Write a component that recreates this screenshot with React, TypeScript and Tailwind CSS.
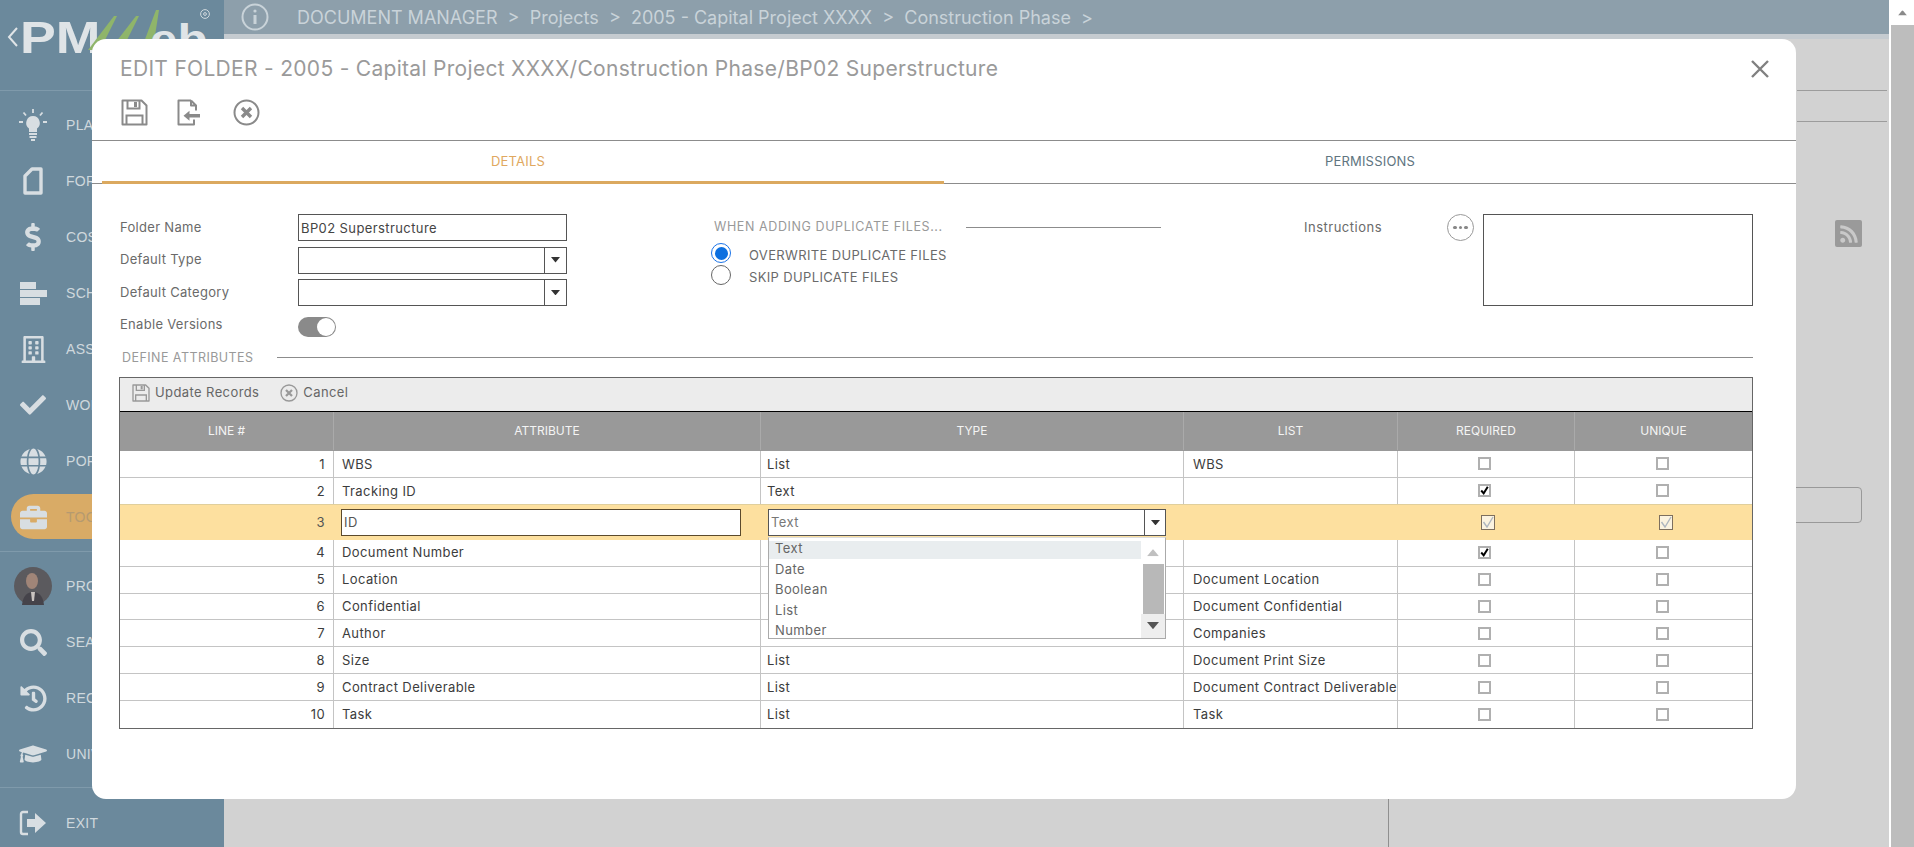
import {
  FaDollarSign,
  FaCheck,
  FaGlobe,
  FaBriefcase,
  FaSearch,
  FaHistory,
  FaGraduationCap,
  FaRss,
  FaRegBuilding,
} from "react-icons/fa";
import type { ReactNode } from "react";

const fontStack = "font-['Inter','Noto_Sans',sans-serif]";

const BulbIcon = () => (
  <svg width="28" height="32" viewBox="0 0 28 32" fill="none" stroke="#d8dee2">
    <path d="M14 7a7 7 0 0 0-4 12.6V23h8v-3.4A7 7 0 0 0 14 7z" fill="#d8dee2" stroke="none" />
    <path d="M10 25h8M10.5 28h7M12 31h4" strokeWidth="2" />
    <path d="M14 0v4M4.5 3.5l2.5 3M23.5 3.5l-2.5 3M0 13h4M24 13h4" strokeWidth="1.8" />
  </svg>
);

const FormIcon = () => (
  <svg width="20" height="28" viewBox="0 0 20 28" fill="none" stroke="#d8dee2" strokeWidth="3.4">
    <path d="M9 2h9v24H2V9z" strokeLinejoin="round" />
  </svg>
);

const BarsIcon = () => (
  <svg width="27" height="23" viewBox="0 0 27 23" fill="#d8dee2">
    <rect x="0" y="0" width="16" height="7" />
    <rect x="0" y="8" width="27" height="7" />
    <rect x="0" y="16" width="20" height="7" />
  </svg>
);

const ExitIcon = () => (
  <svg width="28" height="28" viewBox="0 0 28 28" fill="none">
    <path d="M9 3H4a2 2 0 0 0-2 2v18a2 2 0 0 0 2 2h5" stroke="#d8dee2" strokeWidth="2.4" />
    <path d="M8 10h8V4l11 10-11 10v-6H8z" fill="#d8dee2" />
  </svg>
);

const Avatar = () => (
  <svg width="38" height="38" viewBox="0 0 38 38">
    <circle cx="19" cy="19" r="19" fill="#5b5a5e" />
    <ellipse cx="18" cy="14" rx="6" ry="8" fill="#a08578" />
    <path d="M8 38c1-10 6-13 11-13s10 3 11 13z" fill="#45434a" />
    <path d="M17 25h4l-1 9h-2z" fill="#c9c3c0" />
  </svg>
);

const SaveIcon = ({ size = 27, color = "#8a8a8a" }: { size?: number; color?: string }) => (
  <svg width={size} height={size} viewBox="0 0 27 27" fill="none" stroke={color} strokeWidth="2">
    <path d="M1.5 1.5h19l5 5v19h-24z" strokeLinejoin="round" />
    <path d="M6.5 1.5v8h12v-8" />
    <rect x="13" y="3" width="3" height="5" fill={color} stroke="none" />
    <path d="M5.5 25.5v-9h16v9" />
  </svg>
);

const LoadIcon = () => (
  <svg width="24" height="27" viewBox="0 0 24 27" fill="none" stroke="#8a8a8a" strokeWidth="2">
    <path d="M14 1.5H1.5v24H17v-5M14 1.5l5 5v5M14 1.5v5h5" strokeLinejoin="round" />
    <path d="M10 15h13v3.5H10z" fill="#8a8a8a" stroke="none" />
    <path d="M6.5 16.8l6-5v10z" fill="#8a8a8a" stroke="none" />
  </svg>
);

const CancelIcon = ({ size = 27, color = "#8a8a8a" }: { size?: number; color?: string }) => (
  <svg width={size} height={size} viewBox="0 0 27 27" fill="none" stroke={color}>
    <circle cx="13.5" cy="13.5" r="12" strokeWidth="2" />
    <path d="M9 9l9 9M18 9l-9 9" strokeWidth="3.4" />
  </svg>
);

const Caret = ({ className = "", w = 9 }: { className?: string; w?: number }) => (
  <svg width={w} height={w * 0.6} viewBox="0 0 10 6" className={className}>
    <path d="M0 0h10L5 6z" fill="currentColor" />
  </svg>
);

const navTop: { icon: ReactNode; label: string; active?: boolean }[] = [
  { icon: <BulbIcon />, label: "PLANNING" },
  { icon: <FormIcon />, label: "FORMS" },
  { icon: <FaDollarSign size={28} color="#d8dee2" />, label: "COSTS" },
  { icon: <BarsIcon />, label: "SCHEDULES" },
  { icon: <FaRegBuilding size={27} color="#d8dee2" />, label: "ASSETS" },
  { icon: <FaCheck size={26} color="#d8dee2" />, label: "WORKFLOW" },
  { icon: <FaGlobe size={27} color="#d8dee2" />, label: "PORTFOLIO" },
  { icon: <FaBriefcase size={27} color="#d8dee2" />, label: "TOOLS", active: true },
];

const navBottom: { icon: ReactNode; label: string }[] = [
  { icon: <Avatar />, label: "PROFILE" },
  { icon: <FaSearch size={27} color="#d8dee2" />, label: "SEARCH" },
  { icon: <FaHistory size={27} color="#d8dee2" />, label: "RECENT" },
  { icon: <FaGraduationCap size={28} color="#d8dee2" />, label: "UNIVERSITY" },
];

const NavItem = ({ icon, label, active }: { icon: ReactNode; label: string; active?: boolean }) => (
  <div className="h-[56px] flex items-center relative">
    {active && <div className="absolute left-[11px] top-[5px] h-[45px] w-[213px] rounded-l-[23px] bg-[#d9ab66]" />}
    <div className="relative w-[66px] flex justify-center">{icon}</div>
    <span className={`relative text-[14px] tracking-[0.3px] font-['Liberation_Sans',sans-serif] ${active ? "text-[#b59a70]" : "text-[#cfd8dd]"}`}>{label}</span>
  </div>
);

const logoFont = "font-['Liberation_Sans',sans-serif]";

const Sidebar = () => (
  <div className="w-[224px] shrink-0 h-full bg-[#6b899c] flex flex-col overflow-hidden">
    <div className="h-[91px] shrink-0 border-b border-[#7f9aab] relative">
      <svg width="12" height="20" viewBox="0 0 12 20" fill="none" stroke="#dfe4e7" strokeWidth="2" className="absolute left-[7px] top-[27px]">
        <path d="M10 1L2 10l8 9" />
      </svg>
      <span className={`absolute left-[20px] top-[15px] text-[44px] leading-[46px] font-bold text-[#dfe4e7] origin-left scale-x-[1.22] ${logoFont}`}>PM</span>
      <svg width="80" height="44" viewBox="0 0 80 44" className="absolute left-[86px] top-[8px]">
        <path d="M2 42L28 8h3L14 42z" fill="#8fb56a" />
        <path d="M30 34L50 8h3L40 34z" fill="#8fb56a" />
        <path d="M58 34L70 2h3L68 34z" fill="#8fb56a" />
      </svg>
      <span className={`absolute left-[150px] top-[17px] text-[44px] leading-[46px] font-bold text-[#dfe4e7] origin-left scale-x-[1.12] ${logoFont}`}>eb</span>
      <svg width="10" height="10" viewBox="0 0 10 10" fill="none" stroke="#cfd8dd" className="absolute left-[200px] top-[9px]">
        <circle cx="5" cy="5" r="4.4" />
        <circle cx="5" cy="5" r="1.4" />
      </svg>
    </div>
    <div className="pt-[6px]">
      {navTop.map((n) => (
        <NavItem key={n.label} {...n} />
      ))}
    </div>
    <div className="mt-[6px] border-t border-[#7f9aab] pt-[6px]">
      {navBottom.map((n) => (
        <NavItem key={n.label} {...n} />
      ))}
    </div>
    <div className="mt-[5px] border-t border-[#7f9aab] pt-[7px]">
      <NavItem icon={<ExitIcon />} label="EXIT" />
    </div>
  </div>
);

const Background = () => (
  <div className="flex-1 h-full flex flex-col bg-[#d2d2d2]">
    <div className="h-[34px] shrink-0 bg-[#8d9fab] flex items-center pl-[17px] text-[18px] text-[#c9d3d9]">
      <svg width="28" height="28" viewBox="0 0 28 28" fill="none" stroke="#c9d3d9" strokeWidth="2">
        <circle cx="14" cy="14" r="12.5" />
        <path d="M14 12v9" strokeWidth="3" />
        <circle cx="14" cy="8" r="1.6" fill="#c9d3d9" stroke="none" />
      </svg>
      <span className="ml-[28px] whitespace-pre">DOCUMENT MANAGER  &gt;  Projects  &gt;  2005 - Capital Project XXXX  &gt;  Construction Phase  &gt;</span>
    </div>
    <div className="h-[5px] shrink-0 bg-[#c5cbd0]" />
    <div className="flex-1 flex flex-col items-end pr-[2px] relative">
      <div className="mt-[51px] h-[32px] w-[90px] border-y border-[#9c9c9c]" />
      <div className="mt-[98px] mr-[25px] w-[27px] h-[27px] bg-[#9a9a9a] rounded-[2px] flex items-center justify-center">
        <FaRss size={20} color="#c9c9c9" />
      </div>
      <div className="mt-[240px] mr-[25px] w-[80px] h-[36px] border border-[#999] rounded-[4px]" />
      <div className="absolute left-[1164px] top-[760px] w-px h-[60px] bg-[#8f8f8f]" />
    </div>
  </div>
);

const PageScrollbar = () => (
  <div className="w-[25px] shrink-0 h-full border-l-[2px] border-white flex flex-col bg-[#bdbdbd]">
    <div className="h-[25px] bg-white flex items-center justify-center text-[#8a8a8a]">
      <Caret className="rotate-180" />
    </div>
  </div>
);

const Field = ({ label, children }: { label: string; children: ReactNode }) => (
  <div className="flex items-center">
    <span className="w-[178px] text-[13px] tracking-[0.3px] text-[#6a6a6a]">{label}</span>
    {children}
  </div>
);

const ComboBox = () => (
  <div className="w-[269px] h-[27px] border border-[#555] flex justify-end">
    <div className="w-[22px] border-l border-[#555] flex items-center justify-center text-[#333]">
      <Caret />
    </div>
  </div>
);

const Radio = ({ label, on }: { label: string; on?: boolean }) => (
  <div className="flex items-center h-[22px]">
    <span className={`w-[20px] h-[20px] rounded-full border flex items-center justify-center ${on ? "border-[#1a73e8] bg-white" : "border-[#666]"}`}>
      {on && <span className="w-[13px] h-[13px] rounded-full bg-[#0b6fe0]" />}
    </span>
    <span className="ml-[18px] mt-[6px] text-[13px] tracking-[0.35px] text-[#6a6a6a]">{label}</span>
  </div>
);

const cols = "grid grid-cols-[213px_427px_423px_214px_177px_178px]";

const rows: [number, string, string, string, boolean][] = [
  [1, "WBS", "List", "WBS", false],
  [2, "Tracking ID", "Text", "", true],
  [3, "", "", "", false],
  [4, "Document Number", "", "", true],
  [5, "Location", "", "Document Location", false],
  [6, "Confidential", "", "Document Confidential", false],
  [7, "Author", "", "Companies", false],
  [8, "Size", "List", "Document Print Size", false],
  [9, "Contract Deliverable", "List", "Document Contract Deliverable", false],
  [10, "Task", "List", "Task", false],
];

const Check = ({ on }: { on?: boolean }) => (
  <span className="mr-[3px] w-[13px] h-[13px] border-2 border-[#b0b0b0] bg-white flex items-center justify-center">
    {on && (
      <svg width="11" height="11" viewBox="0 0 11 11" fill="none" stroke="#000" strokeWidth="2.4">
        <path d="M1.5 5.5l3 3.5 5-8" />
      </svg>
    )}
  </span>
);

const BigCheck = () => (
  <span className="ml-[5px] w-[14px] h-[15px] border border-[#7d6f5e] bg-[#fbf3e0] flex items-center justify-center">
    <svg width="12" height="12" viewBox="0 0 12 12" fill="none" stroke="#aeb6bf" strokeWidth="1.4">
      <path d="M1.5 6l3.5 5 6-10" />
    </svg>
  </span>
);

const cell = "border-l border-[#c4c4c4] flex items-center";

const EditRow = () => (
  <div className={`${cols} h-[36px] bg-[#fde09f] border-t border-[#e0cf9c] -mt-px relative`}>
    <div className="flex items-center justify-end pr-[8px] text-[13px] text-[#555]">3</div>
    <div className="flex items-center pl-[8px]">
      <input readOnly value="ID" className="w-[400px] h-[27px] bg-white border border-[#5c4a2c] px-[2px] text-[13px] text-[#555] outline-none" />
    </div>
    <div className="flex items-center pl-[8px]">
      <div className="w-[398px] h-[27px] bg-white border border-[#555] flex items-center justify-between text-[13px] text-[#777]">
        <span className="pl-[2px]">Text</span>
        <span className="w-[21px] h-full border-l border-[#555] flex items-center justify-center text-[#333]">
          <Caret />
        </span>
      </div>
    </div>
    <div />
    <div className="flex items-center justify-center">
      <BigCheck />
    </div>
    <div className="flex items-center justify-center">
      <BigCheck />
    </div>
    <div className="absolute left-[648px] top-[32px] w-[398px] h-[102px] bg-white border border-[#aaa] border-t-[#ddd] z-10 overflow-hidden text-[13px] text-[#666]">
      <div className="mt-[3px] h-[18px] w-[372px] bg-[#e9edef] pl-[6px] leading-[15px]">Text</div>
      {["Date", "Boolean", "List", "Number"].map((o) => (
        <div key={o} className="pl-[6px] h-[20.4px] leading-[20px]">{o}</div>
      ))}
      <div className="absolute right-0 top-0 bottom-0 w-[24px] flex flex-col items-center">
        <div className="h-[26px] w-full flex items-center justify-center text-[#c0c0c0] pt-[4px]">
          <Caret className="rotate-180" w={12} />
        </div>
        <div className="h-[50px] w-[21px] bg-[#b8b8b8]" />
        <div className="flex-1 w-full bg-[#eeeeee] flex items-center justify-center text-[#555]">
          <Caret w={12} />
        </div>
      </div>
    </div>
  </div>
);

const AttributesGrid = () => (
  <div className="border border-[#666] text-[13px] tracking-[0.4px]">
    <div className="h-[34px] pb-[3px] bg-[#ececec] border-b border-black flex items-center pl-[12px] text-[#666]">
      <SaveIcon size={18} color="#999" />
      <span className="ml-[5px]">Update Records</span>
      <span className="ml-[21px]">
        <CancelIcon size={18} color="#999" />
      </span>
      <span className="ml-[5px]">Cancel</span>
    </div>
    <div className={`${cols} h-[39px] pb-[1px] bg-[#999] text-[12px] tracking-normal text-[#f4f4f4]`}>
      {["LINE #", "ATTRIBUTE", "TYPE", "LIST", "REQUIRED", "UNIQUE"].map((h, i) => (
        <div key={h} className={`flex items-center justify-center ${i > 0 ? "border-l border-[#aaaaaa]" : ""}`}>
          {h}
        </div>
      ))}
    </div>
    {rows.map(([n, attr, type, list, req]) =>
      n === 3 ? (
        <EditRow key={n} />
      ) : (
        <div key={n} className={`${cols} h-[26.9px] ${n === 10 ? "" : "border-b border-[#c4c4c4]"} text-[#3c3c3c]`}>
          <div className="flex items-center justify-end pr-[8px] pt-[1px]">{n}</div>
          <div className={`${cell} pl-[8px] pt-[1px]`}>{attr}</div>
          <div className={`${cell} pl-[6px] pt-[1px]`}>{type}</div>
          <div className={`${cell} pl-[9px] pt-[1px] overflow-hidden whitespace-nowrap`}>{list}</div>
          <div className={`${cell} justify-center`}>
            <Check on={req} />
          </div>
          <div className={`${cell} justify-center`}>
            <Check />
          </div>
        </div>
      ),
    )}
  </div>
);

const Modal = () => (
  <div className="absolute left-[92px] top-[39px] w-[1704px] h-[760px] bg-white rounded-[14px] overflow-hidden">
    <div className="h-[60px] flex items-start justify-between pl-[28px] pr-[26px] pt-[15px]">
      <span className="text-[21px] leading-[30px] tracking-[0.3px] text-[#9a9a9a]">
        EDIT FOLDER - 2005 - Capital Project XXXX/Construction Phase/BP02 Superstructure
      </span>
      <svg width="20" height="20" viewBox="0 0 20 20" stroke="#808080" strokeWidth="2.4" className="mt-[5px]">
        <path d="M2 2l16 16M18 2L2 18" />
      </svg>
    </div>
    <div className="h-[42px] flex items-start pl-[29px] border-b border-[#8c8c8c]">
      <SaveIcon />
      <span className="ml-[29px]">
        <LoadIcon />
      </span>
      <span className="ml-[32px]">
        <CancelIcon />
      </span>
    </div>
    <div className="h-[43px] flex border-b border-[#8c8c8c] text-[13px] tracking-[0.2px] relative">
      <div className="w-[842px] ml-[10px] -mb-px pr-[10px] pt-[1px] border-b-[3px] border-[#dba95f] flex items-center justify-center text-[#e0a860]">
        DETAILS
      </div>
      <div className="flex-1 flex items-center justify-center text-[#607580]">PERMISSIONS</div>
    </div>
    <div className="flex pl-[28px] pt-[30px] h-[156px] text-[#6a6a6a]">
      <div className="w-[447px] flex flex-col gap-[5.5px]">
        <Field label="Folder Name">
          <input readOnly value="BP02 Superstructure" className="w-[269px] h-[27px] border border-[#555] px-[2px] text-[13px] tracking-[0.4px] text-[#444] outline-none" />
        </Field>
        <Field label="Default Type">
          <ComboBox />
        </Field>
        <Field label="Default Category">
          <ComboBox />
        </Field>
        <div className="mt-[1px]">
          <Field label="Enable Versions">
            <span className="w-[38px] h-[20px] rounded-full bg-[#8a8a8a] flex justify-end items-center pr-[1px] mt-[4px]">
              <span className="w-[18px] h-[18px] rounded-full bg-white" />
            </span>
          </Field>
        </div>
      </div>
      <div className="ml-[144px] w-[449px] shrink-0">
        <div className="flex items-center h-[26px] pl-[3px]">
          <span className="text-[12.5px] tracking-[0.6px] text-[#999] whitespace-nowrap">WHEN ADDING DUPLICATE FILES...</span>
          <span className="ml-[23px] w-[195px] shrink-0 h-px bg-[#8c8c8c]" />
        </div>
        <div className="mt-[2px]">
          <Radio label="OVERWRITE DUPLICATE FILES" on />
          <Radio label="SKIP DUPLICATE FILES" />
        </div>
      </div>
      <div className="ml-[144px] flex items-start">
        <span className="w-[143px] h-[27px] leading-[27px] text-[13px] tracking-[0.5px]">Instructions</span>
        <span className="w-[27px] h-[27px] rounded-full border border-[#999] flex items-center justify-center gap-[2px]">
          <span className="w-[3.5px] h-[3.5px] rounded-full bg-[#888]" />
          <span className="w-[3.5px] h-[3.5px] rounded-full bg-[#888]" />
          <span className="w-[3.5px] h-[3.5px] rounded-full bg-[#888]" />
        </span>
        <div className="ml-[9px] w-[270px] h-[92px] border border-[#555]" />
      </div>
    </div>
    <div className="pl-[30px] pr-[43px] h-[18px] flex items-center mt-[8px]">
      <span className="pt-[2px] text-[12.5px] tracking-[0.45px] text-[#999]">DEFINE ATTRIBUTES</span>
      <span className="ml-[23px] flex-1 h-px bg-[#8c8c8c]" />
    </div>
    <div className="ml-[27px] mr-[43px] mt-[11px]">
      <AttributesGrid />
    </div>
  </div>
);

export default function App() {
  return (
    <div className={`relative w-[1914px] h-[847px] overflow-hidden flex ${fontStack}`}>
      <Sidebar />
      <Background />
      <PageScrollbar />
      <Modal />
    </div>
  );
}
